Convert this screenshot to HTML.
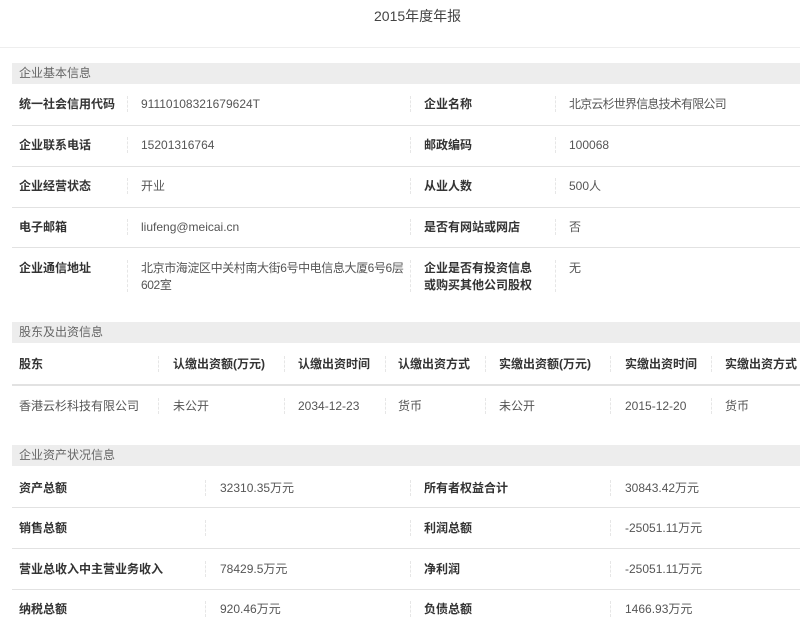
<!DOCTYPE html>
<html><head><meta charset="utf-8"><style>
body{margin:0;width:800px;height:636px;background:#fff;position:relative;overflow:hidden;font-family:"Liberation Sans","Noto Sans CJK SC",sans-serif;font-size:12px;color:#555}
div{position:absolute;white-space:nowrap}
.t{line-height:16px}
.b{font-weight:bold;color:#333}
.bar{left:12px;right:0;height:21px;background:#ededed;line-height:21px;padding-left:7px;color:#666}
.ln{left:12px;right:0;height:0;border-top:1px solid #e2e2e2}
.s{width:0;border-left:1px dashed #e6e6e6}
</style></head><body>
<div class="t" style="left:374px;top:8px;font-size:14px;color:#444">2015年度年报</div>
<div style="left:0;right:0;top:47px;border-top:1px solid #eee"></div>

<div class="bar" style="top:63px">企业基本信息</div>
<div class="t b" style="left:19px;top:96px">统一社会信用代码</div><div class="s" style="left:127px;top:96px;height:16px"></div><div class="t" style="left:141px;top:96px">91110108321679624T</div>
<div class="s" style="left:410px;top:96px;height:16px"></div><div class="t b" style="left:424px;top:96px">企业名称</div><div class="s" style="left:555px;top:96px;height:16px"></div><div class="t" style="left:569px;top:96px;letter-spacing:-0.8px">北京云杉世界信息技术有限公司</div>
<div class="ln" style="top:125px"></div>
<div class="t b" style="left:19px;top:137px">企业联系电话</div><div class="s" style="left:127px;top:137px;height:16px"></div><div class="t" style="left:141px;top:137px">15201316764</div>
<div class="s" style="left:410px;top:137px;height:16px"></div><div class="t b" style="left:424px;top:137px">邮政编码</div><div class="s" style="left:555px;top:137px;height:16px"></div><div class="t" style="left:569px;top:137px">100068</div>
<div class="ln" style="top:166px"></div>
<div class="t b" style="left:19px;top:178px">企业经营状态</div><div class="s" style="left:127px;top:178px;height:16px"></div><div class="t" style="left:141px;top:178px">开业</div>
<div class="s" style="left:410px;top:178px;height:16px"></div><div class="t b" style="left:424px;top:178px">从业人数</div><div class="s" style="left:555px;top:178px;height:16px"></div><div class="t" style="left:569px;top:178px">500人</div>
<div class="ln" style="top:207px"></div>
<div class="t b" style="left:19px;top:219px">电子邮箱</div><div class="s" style="left:127px;top:219px;height:16px"></div><div class="t" style="left:141px;top:219px">liufeng@meicai.cn</div>
<div class="s" style="left:410px;top:219px;height:16px"></div><div class="t b" style="left:424px;top:219px">是否有网站或网店</div><div class="s" style="left:555px;top:219px;height:16px"></div><div class="t" style="left:569px;top:219px">否</div>
<div class="ln" style="top:247px"></div>
<div class="t b" style="left:19px;top:260px">企业通信地址</div><div class="s" style="left:127px;top:260px;height:32px"></div><div class="t" style="left:141px;top:260px;line-height:17px;letter-spacing:-0.4px">北京市海淀区中关村南大街6号中电信息大厦6号6层<br>602室</div>
<div class="s" style="left:410px;top:260px;height:32px"></div><div class="t b" style="left:424px;top:260px;line-height:17px">企业是否有投资信息<br>或购买其他公司股权</div><div class="s" style="left:555px;top:260px;height:32px"></div><div class="t" style="left:569px;top:260px">无</div>

<div class="bar" style="top:322px">股东及出资信息</div>
<div class="t b" style="left:19px;top:356px">股东</div>
<div class="s" style="left:158px;top:356px;height:16px"></div><div class="t b" style="left:173px;top:356px">认缴出资额(万元)</div>
<div class="s" style="left:284px;top:356px;height:16px"></div><div class="t b" style="left:298px;top:356px">认缴出资时间</div>
<div class="s" style="left:385px;top:356px;height:16px"></div><div class="t b" style="left:398px;top:356px">认缴出资方式</div>
<div class="s" style="left:485px;top:356px;height:16px"></div><div class="t b" style="left:499px;top:356px">实缴出资额(万元)</div>
<div class="s" style="left:610px;top:356px;height:16px"></div><div class="t b" style="left:625px;top:356px">实缴出资时间</div>
<div class="s" style="left:711px;top:356px;height:16px"></div><div class="t b" style="left:725px;top:356px">实缴出资方式</div>
<div class="ln" style="top:384px;border-top:2px solid #e2e2e2"></div>
<div class="t" style="left:19px;top:398px">香港云杉科技有限公司</div>
<div class="s" style="left:158px;top:398px;height:16px"></div><div class="t" style="left:173px;top:398px">未公开</div>
<div class="s" style="left:284px;top:398px;height:16px"></div><div class="t" style="left:298px;top:398px">2034-12-23</div>
<div class="s" style="left:385px;top:398px;height:16px"></div><div class="t" style="left:398px;top:398px">货币</div>
<div class="s" style="left:485px;top:398px;height:16px"></div><div class="t" style="left:499px;top:398px">未公开</div>
<div class="s" style="left:610px;top:398px;height:16px"></div><div class="t" style="left:625px;top:398px">2015-12-20</div>
<div class="s" style="left:711px;top:398px;height:16px"></div><div class="t" style="left:725px;top:398px">货币</div>

<div class="bar" style="top:445px">企业资产状况信息</div>
<div class="t b" style="left:19px;top:480px">资产总额</div><div class="s" style="left:205px;top:480px;height:16px"></div><div class="t" style="left:220px;top:480px">32310.35万元</div>
<div class="s" style="left:410px;top:480px;height:16px"></div><div class="t b" style="left:424px;top:480px">所有者权益合计</div><div class="s" style="left:610px;top:480px;height:16px"></div><div class="t" style="left:625px;top:480px">30843.42万元</div>
<div class="ln" style="top:507px"></div>
<div class="t b" style="left:19px;top:520px">销售总额</div><div class="s" style="left:205px;top:520px;height:16px"></div>
<div class="s" style="left:410px;top:520px;height:16px"></div><div class="t b" style="left:424px;top:520px">利润总额</div><div class="s" style="left:610px;top:520px;height:16px"></div><div class="t" style="left:625px;top:520px">-25051.11万元</div>
<div class="ln" style="top:548px"></div>
<div class="t b" style="left:19px;top:561px">营业总收入中主营业务收入</div><div class="s" style="left:205px;top:561px;height:16px"></div><div class="t" style="left:220px;top:561px">78429.5万元</div>
<div class="s" style="left:410px;top:561px;height:16px"></div><div class="t b" style="left:424px;top:561px">净利润</div><div class="s" style="left:610px;top:561px;height:16px"></div><div class="t" style="left:625px;top:561px">-25051.11万元</div>
<div class="ln" style="top:589px"></div>
<div class="t b" style="left:19px;top:601px">纳税总额</div><div class="s" style="left:205px;top:601px;height:16px"></div><div class="t" style="left:220px;top:601px">920.46万元</div>
<div class="s" style="left:410px;top:601px;height:16px"></div><div class="t b" style="left:424px;top:601px">负债总额</div><div class="s" style="left:610px;top:601px;height:16px"></div><div class="t" style="left:625px;top:601px">1466.93万元</div>
</body></html>
